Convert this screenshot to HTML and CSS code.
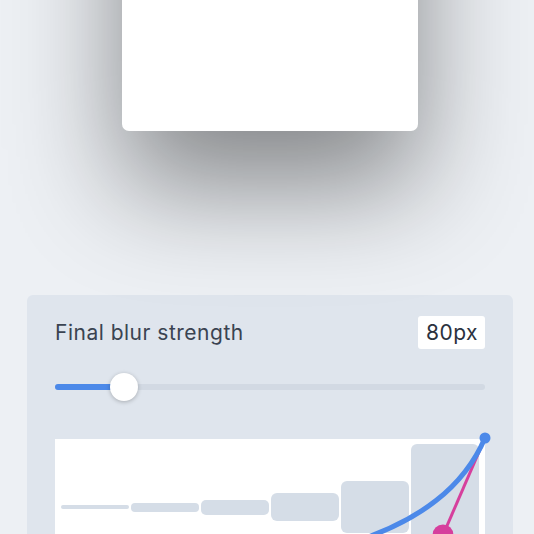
FILE: index.html
```html
<!DOCTYPE html>
<html>
<head>
<meta charset="utf-8">
<link rel="stylesheet" href="styles.css">
</head>
<body>
<div class="page">
  <div class="stage">
    <div class="card"></div>
  </div>
  <section class="panel">
    <div class="row">
      <span class="label">Final blur strength</span>
      <span class="value">80px</span>
    </div>
    <div class="slider">
      <div class="track"><div class="fill"></div></div>
      <div class="thumb"></div>
    </div>
    <div class="chart">
      <div class="bar b1"></div>
      <div class="bar b2"></div>
      <div class="bar b3"></div>
      <div class="bar b4"></div>
      <div class="bar b5"></div>
      <div class="bar b6"></div>
      <svg class="curve" width="430" height="136" viewBox="0 0 430 136">
        <line x1="430" y1="-1" x2="388" y2="96" stroke="#d63f9d" stroke-width="3"/>
        <path d="M0 136 C258 136 388 96 430 -1" fill="none" stroke="#4c89e9" stroke-width="5" stroke-linecap="round"/>
        <circle cx="430" cy="-1" r="5.5" fill="#4c89e9"/>
        <circle cx="388" cy="96" r="10.5" fill="#d63f9d"/>
      </svg>
    </div>
  </section>
</div>
</body>
</html>
```

FILE: styles.css
```css
* { box-sizing: border-box; }
html, body { margin: 0; padding: 0; }
body {
  background: #edf0f4;
  font-family: Inter, "Noto Sans", sans-serif;
  overflow: hidden;
}
.page {
  margin: 0 21px 0 27px;
}
.stage {
  height: 295px;
  display: flex;
  justify-content: center;
  align-items: flex-start;
}
.card {
  width: 296px;
  height: 331px;
  margin-top: -200px;
  background: #fff;
  border-radius: 7px;
  box-shadow: 0 55px 110px rgba(0, 0, 0, 0.44);
}
.panel {
  background: #dfe5ed;
  border-radius: 6px;
  padding: 21px 28px 40px;
}
.row {
  display: flex;
  justify-content: space-between;
  align-items: center;
  height: 33px;
}
.label {
  font-size: 21px;
  letter-spacing: 0.5px;
  color: #3a4351;
}
.value {
  background: #fff;
  border-radius: 3px;
  height: 33px;
  line-height: 33px;
  padding: 0 7px 0 8px;
  font-size: 21px;
  letter-spacing: 0.5px;
  color: #2b323e;
}
.slider {
  position: relative;
  height: 28px;
  margin-top: 24px;
  display: flex;
  align-items: center;
}
.track {
  width: 100%;
  height: 6px;
  border-radius: 3px;
  background: #d2d9e3;
  overflow: hidden;
}
.fill {
  width: 69px;
  height: 100%;
  background: #4c89e9;
}
.thumb {
  position: absolute;
  left: 55px;
  top: 0;
  width: 28px;
  height: 28px;
  border-radius: 50%;
  background: #fff;
  box-shadow: 0 1px 4px rgba(0, 0, 0, 0.25);
}
.chart {
  position: relative;
  margin-top: 38px;
  height: 136px;
  background: #fff;
  padding: 5px 6px;
  display: flex;
  align-items: center;
  gap: 2px;
}
.bar {
  width: 68px;
  background: #d5dde7;
  border-radius: 6px;
}
.b1 { height: 4px; border-radius: 2px; }
.b2 { height: 9px; border-radius: 4px; }
.b3 { height: 15px; border-radius: 5px; }
.b4 { height: 28px; }
.b5 { height: 52px; }
.b6 { height: 126px; }
.curve {
  position: absolute;
  left: 0;
  top: 0;
  overflow: visible;
}
```
